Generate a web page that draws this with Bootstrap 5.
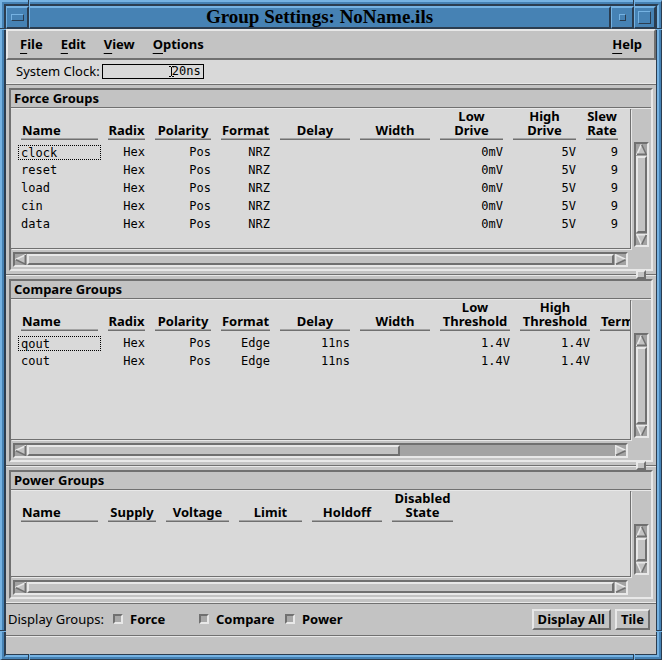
<!DOCTYPE html>
<html lang="en">
<head>
<meta charset="utf-8">
<meta name="viewport" content="width=device-width, initial-scale=1">
<title>Group Settings: NoName.ils</title>
<link href="https://cdn.jsdelivr.net/npm/bootstrap@5.3.0/dist/css/bootstrap.min.css" rel="stylesheet">
<style>
:root{--face:#c3c3c3;--pane:#d9d9d9;--hi:#e8e8e8;--lo:#707070;--trough:#a3a3a3;--wm:#4682b4;--wmhi:#75b2e2;--wmlo:#2b3d50}
body{background:var(--wm);color:#000;font:13px/18px "Noto Sans","Open Sans",sans-serif}
/* window manager frame */
.wm-outer{min-height:100vh;border:2px solid var(--wmhi);border-right:1px solid var(--wmlo);border-bottom:1px solid var(--wmlo);padding:2px;background:var(--wm)}
.wm-inner{border:2px solid var(--wmlo);border-right-color:var(--wmhi);border-bottom-color:var(--wmhi)}
.wm-body{border:solid var(--wmlo);border-width:0 1px 1px 0;background:var(--face)}
.notch{position:absolute;background:var(--wmlo)}
.notch.nv{width:2px;height:6px;border-right:1px solid var(--wmhi)}
.notch.nh{width:6px;height:2px;border-bottom:1px solid var(--wmhi)}
.nv.n-t{top:-2px}.nv.n-b{bottom:-1px}.nv.n-l{left:26px}.nv.n-r{right:26px}
.nh.n-l{left:-2px}.nh.n-r{right:-1px}.nh.n-t{top:26px}.nh.n-b{bottom:27px}
.wm-title{height:23px;background:var(--wm)}
.wm-title>*{border:solid;border-width:2px 2px 2px 1px;border-color:var(--wmhi) var(--wmlo) var(--wmlo) var(--wmhi)}
.wm-title h1{font:bold 19px/18px "Liberation Serif",serif}
.wm-title button{width:23px;background:var(--wm)}
.wm-title .wm-last{width:22px}
.glyph{border:1px solid;border-color:var(--wmhi) var(--wmlo) var(--wmlo) var(--wmhi)}
.g-menu{width:13px;height:7px}.g-min{width:7px;height:7px}.g-max{width:13px;height:13px}
/* menu and clock rows */
.menubar{height:31px;border:2px solid;border-color:var(--hi) var(--lo) var(--lo) var(--hi);gap:18px;padding:0 12px 2px 12px;font-weight:bold}
.menubar a{color:#000;text-decoration:none}
.menubar u{text-underline-offset:4px;text-decoration-thickness:1px}
.clockrow{height:25px;background:var(--pane);border-bottom:1px solid var(--lo);box-shadow:inset 0 -1px var(--hi);padding:0 10px 2px;gap:2px}
.mono,.grid td{font-family:"DejaVu Sans Mono","Liberation Mono",monospace;font-size:12px}
.clockrow input{width:102px;height:15px;border:1px solid #000;background:var(--pane);color:#000;text-align:right;padding:0 2px;line-height:13px}
.ibeam{position:absolute;right:30px;top:2px}
/* group panels */
.panel{border:2px solid;border-color:var(--lo) var(--hi) var(--hi) var(--lo);margin:3px;min-width:0;display:grid;grid-template-columns:minmax(0,1fr) 19px;grid-template-rows:19px minmax(0,1fr) 19px}
.p-tall{flex:183 1 183px}.p-short{flex:129 1 129px}
.panel h2{grid-column:1/3;height:18px;font:bold 13px/17px "Noto Sans","Open Sans",sans-serif;margin:0;padding-left:3px;border-bottom:1px solid var(--lo);box-shadow:0 1px var(--hi)}
.pane{background:var(--pane);border:solid var(--lo);border-width:0 1px 1px 0;box-shadow:1px 1px var(--hi);margin:0 1px 1px 0;overflow:hidden}
.grid{table-layout:fixed;border-collapse:separate;border-spacing:10px 0;width:0}
.grid th{padding:0 0 3px;vertical-align:bottom;font-size:13px;line-height:14px;white-space:nowrap}
.grid th>div{border-bottom:1px solid var(--trough);box-shadow:0 1px var(--lo);margin-bottom:1px;height:30px;padding-bottom:1px;display:flex;flex-direction:column;justify-content:flex-end;text-align:center}
.grid th:first-child>div,.grid th.t-left>div{text-align:left;padding-left:1px}
.grid td{padding:0;height:18px;line-height:18px;text-align:right;white-space:nowrap}
.grid td:first-child{text-align:left}
.cursor-cell{border:1px dotted #000;margin:0 -3px;padding:0 2px;line-height:14px;height:15px}
.w32{width:32px}.w37{width:37px}.w48{width:48px}.w49{width:49px}.w56{width:56px}.w61{width:61px}.w63{width:63px}.w70{width:70px}.w77{width:77px}
/* scroll bars and sashes */
.sb{background:var(--trough);border:2px solid;border-color:var(--lo) var(--hi) var(--hi) var(--lo);display:flex}
.sb button{border:0;padding:0;background:none;line-height:0;flex:none}
.sb-h{margin:2px 4px 2px 2px;height:15px;gap:1px}
.sb-v{margin:33px 2px 3px 2px;flex-direction:column;gap:1px;width:15px}
.thumb{background:var(--face);border:2px solid;border-color:var(--hi) var(--lo) var(--lo) var(--hi);flex:1 1 auto}
.thumb.part{flex:0 0 61%}
.sashline{height:2px;background:var(--hi);border-top:1px solid var(--lo);position:relative}
.sash{position:absolute;right:10px;top:-5px;width:10px;height:9px;background:var(--face);border:2px solid;border-color:var(--hi) var(--lo) var(--lo) var(--hi)}
.endline{height:2px;background:var(--hi);border-bottom:1px solid var(--lo)}
/* bottom controls */
.actions{height:31px;padding:0 6px 1px 2px}
.actions .form-check-input{width:10px;height:10px;border:2px solid;border-color:var(--lo) var(--hi) var(--hi) var(--lo);border-radius:0;background-color:#a8a8a8;margin:0}
.actions .form-check-label{font-weight:bold}
.disp{width:105px}
.opt{gap:7px;width:86px}
.btn.motif{border:2px solid;border-color:var(--hi) var(--lo) var(--lo) var(--hi);border-radius:0;background:var(--face);color:#000;font-size:13px;font-weight:bold;line-height:17px;padding:0 4px}
.status{height:19px;border-top:1px solid var(--lo);box-shadow:inset 0 1px var(--hi)}
</style>
<script src="https://cdn.jsdelivr.net/npm/bootstrap@5.3.0/dist/js/bootstrap.bundle.min.js"></script>
</head>
<body>
<svg class="d-none" aria-hidden="true">
  <symbol id="a-left" viewBox="0 0 11 11"><path d="M11 0L0 5.5L11 11Z" fill="#c3c3c3"/><path d="M11 .7L.5 5.5" stroke="#e8e8e8" stroke-width="1.6"/><path d="M1 5.8L10.3 10.2V1" stroke="#707070" stroke-width="1.5" fill="none"/></symbol>
  <symbol id="a-right" viewBox="0 0 11 11"><path d="M0 0L11 5.5L0 11Z" fill="#c3c3c3"/><path d="M.7 11V.8L10.5 5.3" stroke="#e8e8e8" stroke-width="1.5" fill="none"/><path d="M1 10.3L10.5 5.8" stroke="#707070" stroke-width="1.6"/></symbol>
  <symbol id="a-up" viewBox="0 0 11 11"><path d="M0 11L5.5 0L11 11Z" fill="#c3c3c3"/><path d="M.7 11L5.3 .5" stroke="#e8e8e8" stroke-width="1.6"/><path d="M5.7 .8L10.2 10.3H1" stroke="#707070" stroke-width="1.5" fill="none"/></symbol>
  <symbol id="a-down" viewBox="0 0 11 11"><path d="M0 0H11L5.5 11Z" fill="#c3c3c3"/><path d="M11 .7H.8L5.3 10.5" stroke="#e8e8e8" stroke-width="1.5" fill="none"/><path d="M10.3 1L5.7 10.5" stroke="#707070" stroke-width="1.6"/></symbol>
</svg>
<div class="wm-outer d-flex flex-column position-relative">
  <span class="notch nv n-l n-t"></span><span class="notch nv n-r n-t"></span>
  <span class="notch nv n-l n-b"></span><span class="notch nv n-r n-b"></span>
  <span class="notch nh n-l n-t"></span><span class="notch nh n-l n-b"></span>
  <span class="notch nh n-r n-t"></span><span class="notch nh n-r n-b"></span>
  <div class="wm-inner d-flex flex-column flex-grow-1">
  <div class="wm-body d-flex flex-column flex-grow-1">
    <header class="wm-title d-flex">
      <button type="button" aria-label="Window menu" class="d-flex align-items-center justify-content-center p-0"><span class="glyph g-menu"></span></button>
      <h1 class="flex-grow-1 text-center m-0">Group Settings: NoName.ils</h1>
      <button type="button" aria-label="Minimize" class="d-flex align-items-center justify-content-center p-0"><span class="glyph g-min"></span></button>
      <button type="button" aria-label="Maximize" class="wm-last d-flex align-items-center justify-content-center p-0"><span class="glyph g-max"></span></button>
    </header>
    <nav class="menubar d-flex align-items-center">
      <a href="#"><u>F</u>ile</a><a href="#"><u>E</u>dit</a><a href="#"><u>V</u>iew</a><a href="#"><u>O</u>ptions</a><a href="#" class="ms-auto"><u>H</u>elp</a>
    </nav>
    <div class="clockrow d-flex align-items-center">
      <label for="clk">System Clock:</label>
      <div class="position-relative d-flex"><input id="clk" class="mono" type="text" value="20ns">
        <svg class="ibeam" width="5" height="11" viewBox="0 0 5 11" fill="none" stroke="#000"><path d="M0 .5H2M3 .5H5M2.5 1V10M0 10.5H2M3 10.5H5"/></svg></div>
    </div>

    <section class="panel p-tall">
      <h2>Force Groups</h2>
      <div class="pane">
        <table class="grid">
          <colgroup><col class="w77"><col class="w37"><col class="w56"><col class="w49"><col class="w70"><col class="w70"><col class="w63"><col class="w63"><col class="w32"></colgroup>
          <thead><tr><th><div>Name</div></th><th><div>Radix</div></th><th><div>Polarity</div></th><th><div>Format</div></th><th><div>Delay</div></th><th><div>Width</div></th><th><div><span>Low</span><span>Drive</span></div></th><th><div><span>High</span><span>Drive</span></div></th><th><div><span>Slew</span><span>Rate</span></div></th></tr></thead>
          <tbody>
            <tr><td><div class="cursor-cell">clock</div></td><td>Hex</td><td>Pos</td><td>NRZ</td><td></td><td></td><td>0mV</td><td>5V</td><td>9</td></tr>
            <tr><td>reset</td><td>Hex</td><td>Pos</td><td>NRZ</td><td></td><td></td><td>0mV</td><td>5V</td><td>9</td></tr>
            <tr><td>load</td><td>Hex</td><td>Pos</td><td>NRZ</td><td></td><td></td><td>0mV</td><td>5V</td><td>9</td></tr>
            <tr><td>cin</td><td>Hex</td><td>Pos</td><td>NRZ</td><td></td><td></td><td>0mV</td><td>5V</td><td>9</td></tr>
            <tr><td>data</td><td>Hex</td><td>Pos</td><td>NRZ</td><td></td><td></td><td>0mV</td><td>5V</td><td>9</td></tr>
          </tbody>
        </table>
      </div>
      <div class="sb sb-v"><button type="button" aria-label="Scroll up"><svg width="11" height="11"><use href="#a-up"/></svg></button><div class="thumb"></div><button type="button" aria-label="Scroll down"><svg width="11" height="11"><use href="#a-down"/></svg></button></div>
      <div class="sb sb-h"><button type="button" aria-label="Scroll left"><svg width="11" height="11"><use href="#a-left"/></svg></button><div class="thumb"></div><button type="button" aria-label="Scroll right"><svg width="11" height="11"><use href="#a-right"/></svg></button></div>
    </section>
    <div class="sashline"><span class="sash"></span></div>

    <section class="panel p-tall">
      <h2>Compare Groups</h2>
      <div class="pane">
        <table class="grid">
          <colgroup><col class="w77"><col class="w37"><col class="w56"><col class="w49"><col class="w70"><col class="w70"><col class="w70"><col class="w70"><col class="w70"></colgroup>
          <thead><tr><th><div>Name</div></th><th><div>Radix</div></th><th><div>Polarity</div></th><th><div>Format</div></th><th><div>Delay</div></th><th><div>Width</div></th><th><div><span>Low</span><span>Threshold</span></div></th><th><div><span>High</span><span>Threshold</span></div></th><th class="t-left"><div>Term</div></th></tr></thead>
          <tbody>
            <tr><td><div class="cursor-cell">qout</div></td><td>Hex</td><td>Pos</td><td>Edge</td><td>11ns</td><td></td><td>1.4V</td><td>1.4V</td><td></td></tr>
            <tr><td>cout</td><td>Hex</td><td>Pos</td><td>Edge</td><td>11ns</td><td></td><td>1.4V</td><td>1.4V</td><td></td></tr>
          </tbody>
        </table>
      </div>
      <div class="sb sb-v"><button type="button" aria-label="Scroll up"><svg width="11" height="11"><use href="#a-up"/></svg></button><div class="thumb"></div><button type="button" aria-label="Scroll down"><svg width="11" height="11"><use href="#a-down"/></svg></button></div>
      <div class="sb sb-h"><button type="button" aria-label="Scroll left"><svg width="11" height="11"><use href="#a-left"/></svg></button><div class="thumb part"></div><button type="button" aria-label="Scroll right" class="ms-auto"><svg width="11" height="11"><use href="#a-right"/></svg></button></div>
    </section>
    <div class="sashline"><span class="sash"></span></div>

    <section class="panel p-short">
      <h2>Power Groups</h2>
      <div class="pane">
        <table class="grid">
          <colgroup><col class="w77"><col class="w48"><col class="w63"><col class="w63"><col class="w70"><col class="w61"></colgroup>
          <thead><tr><th><div>Name</div></th><th><div>Supply</div></th><th><div>Voltage</div></th><th><div>Limit</div></th><th><div>Holdoff</div></th><th><div><span>Disabled</span><span>State</span></div></th></tr></thead>
        </table>
      </div>
      <div class="sb sb-v"><button type="button" aria-label="Scroll up"><svg width="11" height="11"><use href="#a-up"/></svg></button><div class="thumb"></div><button type="button" aria-label="Scroll down"><svg width="11" height="11"><use href="#a-down"/></svg></button></div>
      <div class="sb sb-h"><button type="button" aria-label="Scroll left"><svg width="11" height="11"><use href="#a-left"/></svg></button><div class="thumb"></div><button type="button" aria-label="Scroll right"><svg width="11" height="11"><use href="#a-right"/></svg></button></div>
    </section>
    <div class="endline"></div>

    <div class="actions d-flex align-items-center">
      <span class="disp">Display Groups:</span>
      <div class="opt d-flex align-items-center"><input class="form-check-input" type="checkbox" id="cf"><label class="form-check-label" for="cf">Force</label></div>
      <div class="opt d-flex align-items-center"><input class="form-check-input" type="checkbox" id="cc"><label class="form-check-label" for="cc">Compare</label></div>
      <div class="opt d-flex align-items-center"><input class="form-check-input" type="checkbox" id="cp"><label class="form-check-label" for="cp">Power</label></div>
      <button type="button" class="btn motif ms-auto me-1">Display All</button>
      <button type="button" class="btn motif">Tile</button>
    </div>
    <div class="status"></div>
  </div>
  </div>
</div>
</body>
</html>
